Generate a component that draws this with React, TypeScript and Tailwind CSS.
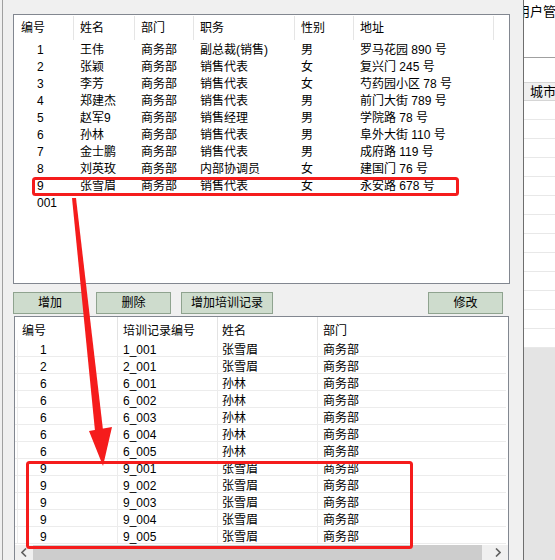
const employees = [
  ["1", "王伟", "商务部", "副总裁(销售)", "男", "罗马花园 890 号"],
  ["2", "张颖", "商务部", "销售代表", "女", "复兴门 245 号"],
  ["3", "李芳", "商务部", "销售代表", "女", "芍药园小区 78 号"],
  ["4", "郑建杰", "商务部", "销售代表", "男", "前门大街 789 号"],
  ["5", "赵军9", "商务部", "销售经理", "男", "学院路 78 号"],
  ["6", "孙林", "商务部", "销售代表", "男", "阜外大街 110 号"],
  ["7", "金士鹏", "商务部", "销售代表", "男", "成府路 119 号"],
  ["8", "刘英玫", "商务部", "内部协调员", "女", "建国门 76 号"],
  ["9", "张雪眉", "商务部", "销售代表", "女", "永安路 678 号"],
  ["001", "", "", "", "", ""],
];

const training = [
  ["1", "1_001", "张雪眉", "商务部"],
  ["2", "2_001", "张雪眉", "商务部"],
  ["6", "6_001", "孙林", "商务部"],
  ["6", "6_002", "孙林", "商务部"],
  ["6", "6_003", "孙林", "商务部"],
  ["6", "6_004", "孙林", "商务部"],
  ["6", "6_005", "孙林", "商务部"],
  ["9", "9_001", "张雪眉", "商务部"],
  ["9", "9_002", "张雪眉", "商务部"],
  ["9", "9_003", "张雪眉", "商务部"],
  ["9", "9_004", "张雪眉", "商务部"],
  ["9", "9_005", "张雪眉", "商务部"],
];

// column widths of the top list view
const listCols = ["w-[60px]", "w-[61px]", "w-[59px]", "w-[101px]", "w-[59px]", "w-[140px]"];
const listHeads = ["编号", "姓名", "部门", "职务", "性别", "地址"];

function EmployeeList() {
  return (
    <div className="w-[497px] h-[270px] border border-[#828790] bg-white overflow-hidden">
      <div className="flex h-[26px] items-center">
        {listHeads.map((h, i) => (
          <div
            key={h}
            className={`${listCols[i]} h-[24px] flex items-center border-r border-[#e5e5e5] ${i === 0 ? "pl-[7px]" : "pl-[6px]"}`}
          >
            {h}
          </div>
        ))}
      </div>
      {employees.map((row, r) => (
        <div key={r} className="flex h-[17px] items-center">
          {row.map((cell, i) => (
            <div
              key={i}
              className={`${listCols[i]} whitespace-nowrap ${i === 0 ? "pl-[23px]" : "pl-[6px]"}`}
            >
              {cell}
            </div>
          ))}
        </div>
      ))}
    </div>
  );
}

function Button({ label, className }: { label: string; className: string }) {
  return (
    <button
      className={`h-[22px] border border-[#8fa38f] bg-[#cedccd] text-[12px] text-black flex items-center justify-center ${className}`}
    >
      {label}
    </button>
  );
}

function TrainingGrid() {
  return (
    <div className="ml-[1px] mt-[2px] w-[495px] flex-1 border border-b-0 border-[#828790] bg-white flex flex-col overflow-hidden">
      <div className="flex h-[25px] items-center">
        <div className="w-[2px]" />
        <div className="w-[100px] h-[23px] flex items-center pt-[4px] pl-[5px]">编号</div>
        <div className="w-[100px] h-[23px] flex items-center pt-[4px] pl-[5px] border-l border-[#e3e3e3]">培训记录编号</div>
        <div className="w-[100px] h-[23px] flex items-center pt-[4px] pl-[4px] border-l border-[#e3e3e3]">姓名</div>
        <div className="w-[189px] h-[23px] flex items-center pt-[4px] pl-[5px] border-l border-[#e3e3e3]">部门</div>
      </div>
      {training.map((row, r) => (
        <div key={r} className="flex h-[17px] w-[491px] border-b border-[#ececec]">
          <div className="w-[2px]" />
          <div className="w-[100px] pt-[4px] pl-[22px] border-l border-[#ececec] flex items-center">{row[0]}</div>
          <div className="w-[100px] pt-[4px] pl-[5px] border-l border-[#ececec] flex items-center">{row[1]}</div>
          <div className="w-[100px] pt-[4px] pl-[4px] border-l border-[#ececec] flex items-center">{row[2]}</div>
          <div className="w-[189px] pt-[4px] pl-[5px] border-l border-[#ececec] flex items-center">{row[3]}</div>
        </div>
      ))}
      <div className="mt-[1px] flex h-[17px]">
        <div className="w-[18px] bg-[#f0f0f0] flex items-center justify-center">
          <svg width="6" height="9" viewBox="0 0 6 9">
            <polyline points="5,0.5 1,4.5 5,8.5" fill="none" stroke="#606060" strokeWidth="1.6" />
          </svg>
        </div>
        <div className="w-[449px] bg-[#cdcdcd]" />
        <div className="flex-1 bg-[#f0f0f0] flex items-center justify-end pr-[7px]">
          <svg width="6" height="9" viewBox="0 0 6 9">
            <polyline points="1,0.5 5,4.5 1,8.5" fill="none" stroke="#606060" strokeWidth="1.6" />
          </svg>
        </div>
      </div>
    </div>
  );
}

function SidePanel() {
  return (
    <div className="flex-1 border-l border-[#6e6e6e] bg-white flex flex-col overflow-hidden">
      <div className="h-[58px] border-b border-[#a0a0a0] pt-[4px]">
        <div className="-ml-[7px] whitespace-nowrap text-[13px] leading-[16px]">用户管</div>
      </div>
      <div className="h-[24px]" />
      <div className="h-[19px] bg-[#f0f0f0] border-y border-[#d5d5d5] pl-[6px] flex items-center text-[13px] whitespace-nowrap">
        城市
      </div>
      {Array.from({ length: 13 }).map((_, i) => (
        <div key={i} className="h-[19px] border-b border-[#e8e8e8]" />
      ))}
      <div className="flex-1 bg-[#e4e4e4]" />
    </div>
  );
}

function Annotations() {
  return (
    <svg className="absolute left-0 top-0 pointer-events-none" width="555" height="560" viewBox="0 0 555 560">
      <rect x="33.5" y="178.5" width="424" height="16" rx="2" fill="none" stroke="#f51c1c" strokeWidth="3" />
      <rect x="27.5" y="462.5" width="384" height="85" rx="2" fill="none" stroke="#f51c1c" strokeWidth="3" />
      <polygon points="72,198 76,198 103,430 95,431" fill="#f51c1c" />
      <polygon points="89,431 112,427 103,466" fill="#f51c1c" />
    </svg>
  );
}

export default function App() {
  return (
    <div className="relative w-[555px] h-[560px] overflow-hidden bg-[#f0f0f0] flex text-[12px] text-black font-['Liberation_Sans','Noto_Sans_CJK_SC',sans-serif]">
      <div className="w-[523px] flex-none">
        <div className="ml-[2px] h-full border-l border-[#a0a0a0] pl-[10px] pt-[14px] flex flex-col">
          <EmployeeList />
          <div className="mt-[8px] flex">
            <Button label="增加" className="w-[74px]" />
            <Button label="删除" className="w-[75px] ml-[9px]" />
            <Button label="增加培训记录" className="w-[92px] ml-[10px]" />
            <Button label="修改" className="w-[75px] ml-[155px]" />
          </div>
          <TrainingGrid />
        </div>
      </div>
      <SidePanel />
      <Annotations />
    </div>
  );
}
